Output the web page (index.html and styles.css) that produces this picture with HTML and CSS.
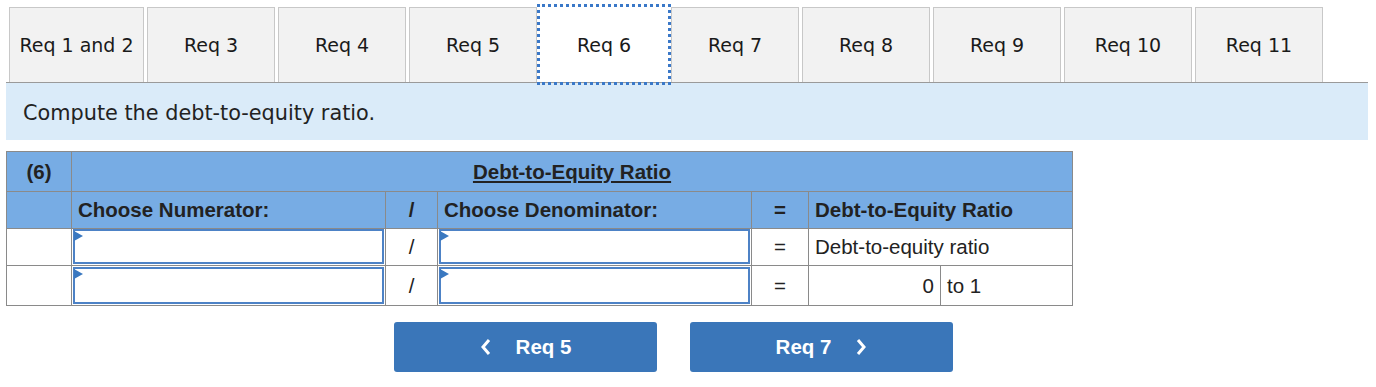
FILE: index.html
```html
<!DOCTYPE html>
<html>
<head>
<meta charset="utf-8">
<link rel="stylesheet" href="styles.css">
</head>
<body>
<div class="page">
  <div class="tabs">
    <div class="tab first">Req 1 and 2</div>
    <div class="tab">Req 3</div>
    <div class="tab">Req 4</div>
    <div class="tab">Req 5</div>
    <div class="tab active">Req 6</div>
    <div class="tab">Req 7</div>
    <div class="tab">Req 8</div>
    <div class="tab">Req 9</div>
    <div class="tab">Req 10</div>
    <div class="tab">Req 11</div>
  </div>
  <div class="prompt">Compute the debt-to-equity ratio.</div>
  <table class="grid">
    <colgroup>
      <col class="c1"><col class="c2"><col class="c3"><col class="c4"><col class="c5"><col class="c6"><col class="c7">
    </colgroup>
    <tr class="r1 head">
      <th class="ctr">(6)</th>
      <th class="ctr" colspan="6"><span class="ul">Debt-to-Equity Ratio</span></th>
    </tr>
    <tr class="r2 head">
      <th></th>
      <th class="lft">Choose Numerator:</th>
      <th class="ctr">/</th>
      <th class="lft">Choose Denominator:</th>
      <th class="ctr">=</th>
      <th class="lft" colspan="2">Debt-to-Equity Ratio</th>
    </tr>
    <tr class="r3">
      <td></td>
      <td class="in"><div class="box"></div></td>
      <td class="ctr">/</td>
      <td class="in"><div class="box"></div></td>
      <td class="ctr">=</td>
      <td colspan="2">Debt-to-equity ratio</td>
    </tr>
    <tr class="r4">
      <td></td>
      <td class="in"><div class="box"></div></td>
      <td class="ctr">/</td>
      <td class="in"><div class="box"></div></td>
      <td class="ctr">=</td>
      <td class="rgt">0</td>
      <td class="sm">to 1</td>
    </tr>
  </table>
  <div class="nav">
    <button class="btn"><svg class="chev" width="12" height="18" viewBox="0 0 12 18"><polyline points="9,2 3,9 9,16" fill="none" stroke="#fff" stroke-width="3"/></svg><span>Req 5</span></button>
    <button class="btn"><span>Req 7</span><svg class="chev" width="12" height="18" viewBox="0 0 12 18"><polyline points="3,2 9,9 3,16" fill="none" stroke="#fff" stroke-width="3"/></svg></button>
  </div>
</div>
</body>
</html>
```
FILE: styles.css
```css
body {
  margin: 0;
  background: #fff;
}
.page {
  padding: 7px 8px 0 6px;
}
.tabs {
  display: flex;
  gap: 3px;
  padding-left: 3px;
  border-bottom: 1px solid #9a9a9a;
}
.tab {
  box-sizing: border-box;
  width: 128px;
  flex: none;
  height: 75px;
  padding: 0;
  border: 1px solid #c8c8c8;
  border-bottom: none;
  background: #f2f2f2;
  display: flex;
  align-items: center;
  justify-content: center;
  font-family: "DejaVu Sans", Verdana, sans-serif;
  font-size: 19px;
  color: #1a1a1a;
  white-space: nowrap;
}
.tab.first {
  width: 135px;
}
.tab.active {
  background: #fff;
  border-color: #fff;
  outline: 3px dotted #3a78c8;
  position: relative;
}
.prompt {
  height: 57px;
  background: #daebf9;
  display: flex;
  align-items: center;
  padding-left: 17px;
  padding-top: 2px;
  box-sizing: border-box;
  font-family: "DejaVu Sans", Verdana, sans-serif;
  font-size: 20.8px;
  color: #222;
}
.grid {
  margin-top: 11px;
  border-collapse: collapse;
  table-layout: fixed;
  width: 1066px;
  font-family: "Liberation Sans", Arial, sans-serif;
  font-size: 20.5px;
  color: #222;
}
.c1 { width: 65px; }
.c2 { width: 314px; }
.c3 { width: 52px; }
.c4 { width: 314px; }
.c5 { width: 57px; }
.c6 { width: 132px; }
.c7 { width: 132px; }
.grid th, .grid td {
  border: 1px solid #8a8a8a;
  padding: 0 6px;
  white-space: nowrap;
}
.head th {
  background: #77ace4;
  font-weight: bold;
  color: #222;
}
.r1 { height: 40px; }
.r2 { height: 37px; }
.r3 { height: 37px; }
.r4 { height: 40px; }
.ctr { text-align: center; }
.lft { text-align: left; }
.rgt { text-align: right; }
.sm { padding-left: 5px; }
.ul { text-decoration: underline; }
.grid td.in {
  padding: 0 1px 1px 1px;
}
.box {
  box-sizing: border-box;
  height: 35px;
  border: 2px solid #4d82c6;
  background: #fff;
  position: relative;
}
.r4 .box { height: 37px; }
.box::before {
  content: "";
  position: absolute;
  left: -1px;
  top: 0;
  border-left: 9px solid #3a78c0;
  border-top: 5px solid transparent;
  border-bottom: 5px solid transparent;
}
.nav {
  width: 1335px;
  margin-top: 16px;
  display: flex;
  justify-content: center;
  gap: 33px;
}
.btn {
  width: 263px;
  height: 50px;
  border: none;
  border-radius: 3px;
  background: #3a76b9;
  color: #fff;
  font-family: "Liberation Sans", Arial, sans-serif;
  font-weight: bold;
  font-size: 20.5px;
  display: flex;
  align-items: center;
  justify-content: center;
  gap: 24px;
  padding: 0;
}
.chev { display: block; }
```
